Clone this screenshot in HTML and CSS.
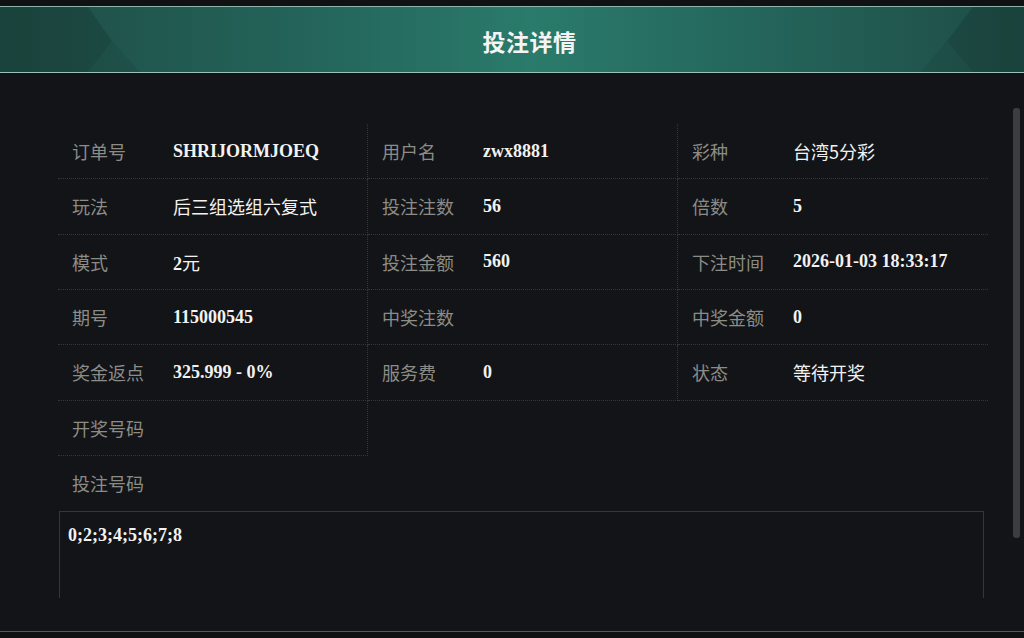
FILE: index.html
```html
<!DOCTYPE html>
<html lang="zh-CN">

<head>
    <meta charset="UTF-8">
    <meta name="viewport" content="width=device-width, initial-scale=1.0">
    <title>投注详情</title>
    <link rel="stylesheet" href="styles.css">
</head>

<body>
    <div class="modal">
        <div class="modal-head">
            <svg class="head-deco" viewBox="0 0 1024 65" preserveAspectRatio="none">
                <polygon points="0,0 88,0 112,34 88,65 0,65" fill="#000" fill-opacity="0.13" />
                <polygon points="112,34 140,65 88,65" fill="#000" fill-opacity="0.06" />
                <polygon points="1024,0 973,0 947,34 973,65 1024,65" fill="#000" fill-opacity="0.13" />
                <polygon points="947,34 973,65 920,65" fill="#000" fill-opacity="0.06" />
            </svg>
            <h2>投注详情</h2>
        </div>

        <div class="modal-body">
            <div class="detail-grid">
                <div class="cell"><span class="label">订单号</span><span class="value">SHRIJORMJOEQ</span></div>
                <div class="cell"><span class="label">用户名</span><span class="value">zwx8881</span></div>
                <div class="cell"><span class="label">彩种</span><span class="value cn">台湾5分彩</span></div>

                <div class="cell"><span class="label">玩法</span><span class="value cn">后三组选组六复式</span></div>
                <div class="cell"><span class="label">投注注数</span><span class="value">56</span></div>
                <div class="cell"><span class="label">倍数</span><span class="value">5</span></div>

                <div class="cell"><span class="label">模式</span><span class="value">2<span class="cn">元</span></span></div>
                <div class="cell"><span class="label">投注金额</span><span class="value">560</span></div>
                <div class="cell"><span class="label">下注时间</span><span class="value">2026-01-03 18:33:17</span></div>

                <div class="cell"><span class="label">期号</span><span class="value">115000545</span></div>
                <div class="cell"><span class="label">中奖注数</span><span class="value"></span></div>
                <div class="cell"><span class="label">中奖金额</span><span class="value">0</span></div>

                <div class="cell"><span class="label">奖金返点</span><span class="value">325.999 - 0%</span></div>
                <div class="cell"><span class="label">服务费</span><span class="value">0</span></div>
                <div class="cell"><span class="label">状态</span><span class="value cn">等待开奖</span></div>

                <div class="cell"><span class="label">开奖号码</span><span class="value"></span></div>
            </div>

            <div class="code-row"><span class="label">投注号码</span></div>
            <div class="code-box">0;2;3;4;5;6;7;8</div>

            <div class="scrollbar"></div>
        </div>

        <div class="modal-foot"></div>
    </div>
</body>

</html>
```

FILE: styles.css
```css
:root {
    --page-bg: #0f1113;
    --panel-bg: #121417;
    --line: #34373a;
    --label: #8c8c87;
    --value: #f2f2f2;
    --teal-edge: #1e4c45;
    --teal-mid: #2a7b6b;
}

html,
body {
    margin: 0;
    height: 100%;
}

body {
    background-color: var(--page-bg);
    font-family: "Noto Sans CJK SC", "Liberation Sans", sans-serif;
    overflow: hidden;
}

.modal {
    margin-top: 6px;
    background-color: var(--panel-bg);
}

.modal-head {
    position: relative;
    height: 65px;
    border-top: 1px solid #8fb3ab;
    border-bottom: 1px solid #9cbfb7;
    background: linear-gradient(90deg, var(--teal-edge) 0%, #24645a 30%, var(--teal-mid) 52%, #24645a 75%, var(--teal-edge) 100%);
    display: flex;
    align-items: center;
    justify-content: center;
}

.head-deco {
    position: absolute;
    left: 0;
    top: 0;
    width: 100%;
    height: 100%;
}

.modal-head h2 {
    position: relative;
    margin: 0;
    padding: 3px 0 0 35px;
    font-size: 23px;
    font-weight: 700;
    color: #f4f4f4;
    letter-spacing: 0.5px;
}

.modal-body {
    position: relative;
    height: 525px;
    overflow: hidden;
    padding: 51px 36px 0 58px;
    box-sizing: border-box;
}

.detail-grid {
    display: grid;
    grid-template-columns: repeat(3, 310px);
}

.cell {
    display: flex;
    align-items: center;
    height: 55.33px;
    box-sizing: border-box;
    padding-left: 14px;
    border-bottom: 1px dotted var(--line);
}

.cell:nth-child(3n+1),
.cell:nth-child(3n+2) {
    border-right: 1px dotted var(--line);
}

.label {
    width: 101px;
    flex-shrink: 0;
    font-size: 18px;
    color: var(--label);
}

.value {
    font-family: "Liberation Serif", "Noto Sans CJK SC", serif;
    font-size: 18px;
    font-weight: 700;
    color: var(--value);
    white-space: nowrap;
}

.value.cn,
.value .cn {
    font-family: "Noto Sans CJK SC", sans-serif;
    font-weight: 400;
}

.code-row {
    display: flex;
    align-items: center;
    height: 55px;
    padding-left: 14px;
}

.code-box {
    margin-left: 1px;
    width: 925px;
    height: 120px;
    box-sizing: border-box;
    border: 1px solid var(--line);
    padding: 12px 8px;
    font-family: "Liberation Serif", serif;
    font-size: 18px;
    line-height: 22px;
    font-weight: 700;
    color: var(--value);
}

.scrollbar {
    position: absolute;
    right: 4px;
    top: 35px;
    width: 7px;
    height: 430px;
    border-radius: 3px;
    background-color: #3b3d40;
}

.modal-foot {
    height: 33px;
    border-bottom: 1px solid #56595b;
}
```
